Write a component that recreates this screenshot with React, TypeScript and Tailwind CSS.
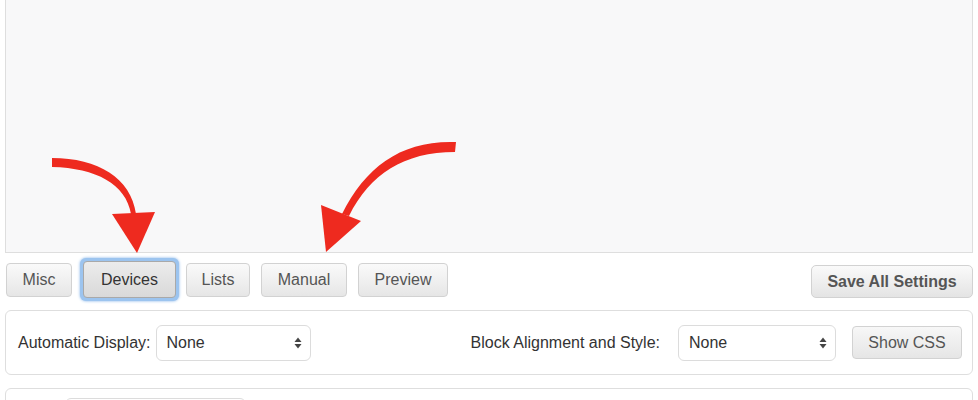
import * as React from 'react';

const font = { fontFamily: '"Liberation Sans", Arial, sans-serif' };

function TabButton({ label, active = false, w }: { label: string; active?: boolean; w: string }) {
  if (active) {
    return (
      <div className="rounded-[6px] p-[3px] bg-[#9cc4ef] shadow-[0_0_3px_#7fb0e8]">
        <button className={`${w} h-[37px] rounded-[4px] border border-[#a9a9a9] bg-gradient-to-b from-[#ececec] to-[#d9d9d9] text-[16px] text-[#333]`}>
          {label}
        </button>
      </div>
    );
  }
  return (
    <button className={`${w} h-[34px] rounded-[4px] border border-[#d2d2d2] bg-gradient-to-b from-[#fafafa] to-[#e6e6e6] text-[16px] text-[#555]`}>
      {label}
    </button>
  );
}

function SelectBox({ w }: { w: string }) {
  return (
    <div className={`${w} h-[36px] rounded-[6px] border border-[#dcdcdc] bg-white flex items-center justify-between pl-[10px] pr-[8px]`}>
      <span className="text-[16px] text-[#333]">None</span>
      <svg width="8" height="12" viewBox="0 0 8 12">
        <path d="M4 0.5 L7.5 5 L0.5 5 Z" fill="#444" />
        <path d="M4 11.5 L7.5 7 L0.5 7 Z" fill="#444" />
      </svg>
    </div>
  );
}

function Arrows() {
  return (
    <svg className="absolute left-0 top-0 pointer-events-none" width="978" height="260" viewBox="0 0 978 260">
      {/* left arrow */}
      <path d="M52 158 C 98 158, 131 178, 136 214 L 131 214 C 126 184, 96 168, 52 167 Z" fill="#ee2a1f" />
      <path d="M112 214 L155 212 L137 253 Z" fill="#ee2a1f" />
      {/* right arrow */}
      <path d="M456 142 C 402 140, 366 166, 342 214 L 349 216 C 370 174, 404 152, 455 152 Z" fill="#ee2a1f" />
      <path d="M321 205 L361 221 L326 252 Z" fill="#ee2a1f" />
    </svg>
  );
}

export default function App() {
  return (
    <div className="relative w-[978px] h-[400px] overflow-hidden bg-white px-[5px]" style={font}>
      <div className="h-[253px] border-x border-b border-[#dedede] bg-[#f8f8f9]" />

      <div className="flex items-center justify-between mt-[5px] pl-[1px]">
        <div className="flex items-center">
          <TabButton label="Misc" w="w-[66px]" />
          <div className="ml-[8px]">
            <TabButton label="Devices" active w="w-[93px]" />
          </div>
          <div className="ml-[7px]">
            <TabButton label="Lists" w="w-[64px]" />
          </div>
          <div className="ml-[11px]">
            <TabButton label="Manual" w="w-[86px]" />
          </div>
          <div className="ml-[11px]">
            <TabButton label="Preview" w="w-[90px]" />
          </div>
        </div>
        <button className="w-[162px] h-[33px] mt-[4px] rounded-[5px] border border-[#d2d2d2] bg-gradient-to-b from-[#fafafa] to-[#e4e4e4] text-[16px] font-bold text-[#555]">
          Save All Settings
        </button>
      </div>

      <div className="mt-[9px] h-[65px] rounded-[6px] border border-[#dedede] bg-white flex items-center pl-[12px] pr-[10px]">
        <span className="text-[16px] text-[#333] mr-[5px]">Automatic Display:</span>
        <SelectBox w="w-[155px]" />
        <span className="ml-auto text-[16px] text-[#333] mr-[18px]">Block Alignment and Style:</span>
        <SelectBox w="w-[158px]" />
        <button className="ml-[16px] w-[110px] h-[33px] rounded-[4px] border border-[#d2d2d2] bg-gradient-to-b from-[#f7f7f7] to-[#e6e6e6] text-[16px] text-[#555]">
          Show CSS
        </button>
      </div>

      <div className="mt-[13px] h-[60px] rounded-[6px] border border-[#dedede] bg-white pl-[59px] pt-[9px]">
        <div className="w-[181px] h-[36px] rounded-[6px] border border-[#dcdcdc] bg-white" />
      </div>

      <Arrows />
    </div>
  );
}
